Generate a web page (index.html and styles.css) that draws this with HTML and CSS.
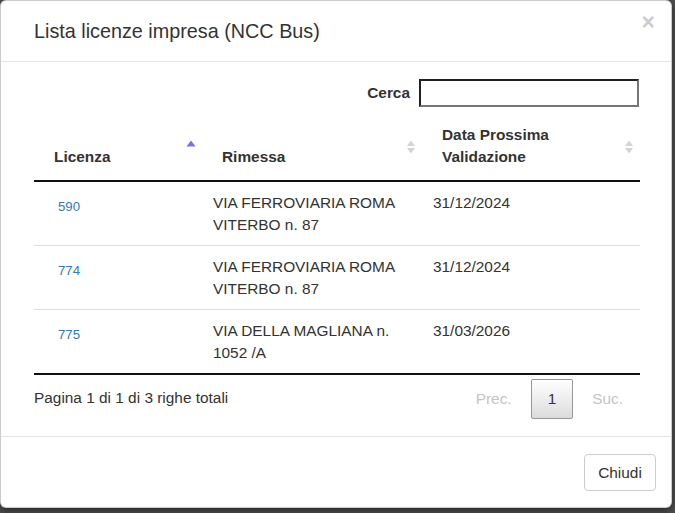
FILE: index.html
```html
<!DOCTYPE html>
<html lang="it">
<head>
<meta charset="utf-8">
<title>Lista licenze impresa</title>
<link rel="stylesheet" href="styles.css">
</head>
<body>
<div class="modal">
  <div class="modal-header">
    <h4 class="modal-title">Lista licenze impresa (NCC Bus)</h4>
    <button class="close" type="button">×</button>
  </div>
  <div class="modal-body">
    <div class="filter">
      <label class="filter-label" for="cerca">Cerca</label>
      <input class="filter-input" id="cerca" type="search">
    </div>
    <table class="grid">
      <colgroup>
        <col class="c1"><col class="c2"><col class="c3">
      </colgroup>
      <thead>
        <tr>
          <th class="sorted">Licenza
            <svg class="sort-icon" width="10" height="14" viewBox="0 0 10 14"><polygon points="5,0.5 9.5,6.5 0.5,6.5" fill="#7474de"/></svg>
          </th>
          <th>Rimessa
            <svg class="sort-icon" width="10" height="14" viewBox="0 0 10 14"><polygon points="5,0.5 9,6 1,6" fill="#d4d4d4"/><polygon points="1,8 9,8 5,13.5" fill="#d4d4d4"/></svg>
          </th>
          <th>Data Prossima<br>Validazione
            <svg class="sort-icon" width="10" height="14" viewBox="0 0 10 14"><polygon points="5,0.5 9,6 1,6" fill="#d4d4d4"/><polygon points="1,8 9,8 5,13.5" fill="#d4d4d4"/></svg>
          </th>
        </tr>
      </thead>
      <tbody>
        <tr>
          <td class="num"><a class="lic" href="#">590</a></td>
          <td>VIA FERROVIARIA ROMA VITERBO n. 87</td>
          <td>31/12/2024</td>
        </tr>
        <tr>
          <td class="num"><a class="lic" href="#">774</a></td>
          <td>VIA FERROVIARIA ROMA VITERBO n. 87</td>
          <td>31/12/2024</td>
        </tr>
        <tr>
          <td class="num"><a class="lic" href="#">775</a></td>
          <td>VIA DELLA MAGLIANA n. 1052 /A</td>
          <td>31/03/2026</td>
        </tr>
      </tbody>
    </table>
    <div class="table-foot">
      <div class="info">Pagina 1 di 1 di 3 righe totali</div>
      <div class="paginate">
        <span class="pg disabled">Prec.</span>
        <span class="pg current">1</span>
        <span class="pg disabled">Suc.</span>
      </div>
    </div>
  </div>
  <div class="modal-footer">
    <button class="btn" type="button">Chiudi</button>
  </div>
</div>
</body>
</html>
```

FILE: styles.css
```css
html, body {
  margin: 0;
  padding: 0;
}

body {
  background: #4f4f4f;
  font-family: "Liberation Sans", Arial, sans-serif;
  font-size: 15.4px;
  line-height: 22px;
  color: #333;
  width: 675px;
  height: 513px;
  overflow: hidden;
}

.modal {
  width: 672px;
  box-sizing: border-box;
  background: #fff;
  border: 1px solid rgba(0, 0, 0, 0.2);
  border-radius: 6px;
  box-shadow: 0 3px 9px rgba(0, 0, 0, 0.5);
}

.modal-header {
  display: flex;
  justify-content: space-between;
  align-items: flex-start;
  padding: 16px 16px 16px 33px;
  border-bottom: 1px solid #e5e5e5;
}

.modal-title {
  margin: 0;
  font-size: 19.8px;
  font-weight: normal;
  line-height: 28px;
  color: #333;
}

.close {
  background: none;
  border: 0;
  padding: 0;
  margin-top: -6px;
  font-family: "Liberation Sans", Arial, sans-serif;
  font-size: 23px;
  font-weight: bold;
  line-height: 23px;
  color: #000;
  opacity: 0.2;
  cursor: pointer;
}

.modal-body {
  padding: 17px 31px 17px 33px;
}

.filter {
  display: flex;
  justify-content: flex-end;
  align-items: center;
  gap: 9px;
}

.filter-label {
  font-weight: bold;
}

.filter-input {
  width: 220px;
  height: 28px;
  box-sizing: border-box;
  border: 2px inset #767676;
  padding: 1px 2px;
  margin: 0 1px 0 0;
  background: #fff;
}

.grid {
  width: 606px;
  border-collapse: collapse;
  table-layout: fixed;
  margin-top: 6px;
  border-bottom: 2px solid #111;
}

.c1 { width: 168px; }
.c2 { width: 220px; }
.c3 { width: 218px; }

.grid th {
  position: relative;
  text-align: left;
  vertical-align: bottom;
  font-weight: bold;
  padding: 11px 20px 12px 20px;
  border-bottom: 2px solid #111;
  color: #333;
}

.sort-icon {
  position: absolute;
  right: 6px;
  top: 50%;
  margin-top: -7px;
}

.grid td {
  vertical-align: top;
  padding: 10px 11px 9px 11px;
  border-top: 1px solid #ddd;
}

.grid tbody tr:first-child td {
  border-top: 0;
}

.grid td.num {
  padding-left: 24px;
}

.lic {
  display: inline-block;
  margin-top: 4px;
  font-size: 13.2px;
  color: #337ab7;
  text-decoration: none;
}

.table-foot {
  display: flex;
  justify-content: space-between;
  align-items: flex-start;
}

.info {
  padding-top: 12px;
}

.paginate {
  display: flex;
  padding-top: 4px;
}

.pg {
  display: block;
  padding: 8px 16px;
  margin-left: 2px;
  border: 1px solid transparent;
  border-radius: 2px;
  line-height: 22px;
}

.pg.disabled {
  color: #c4c4c4;
}

.pg.current {
  color: #333;
  border-color: #979797;
  background: linear-gradient(to bottom, #fff 0%, #dcdcdc 100%);
}

.modal-footer {
  display: flex;
  justify-content: flex-end;
  padding: 17px 15px 16px 15px;
  border-top: 1px solid #e5e5e5;
}

.btn {
  font-family: "Liberation Sans", Arial, sans-serif;
  font-size: 15.4px;
  line-height: 22px;
  color: #333;
  background: #fff;
  border: 1px solid #ccc;
  border-radius: 4px;
  padding: 6.6px 13.2px;
  cursor: pointer;
}
```
